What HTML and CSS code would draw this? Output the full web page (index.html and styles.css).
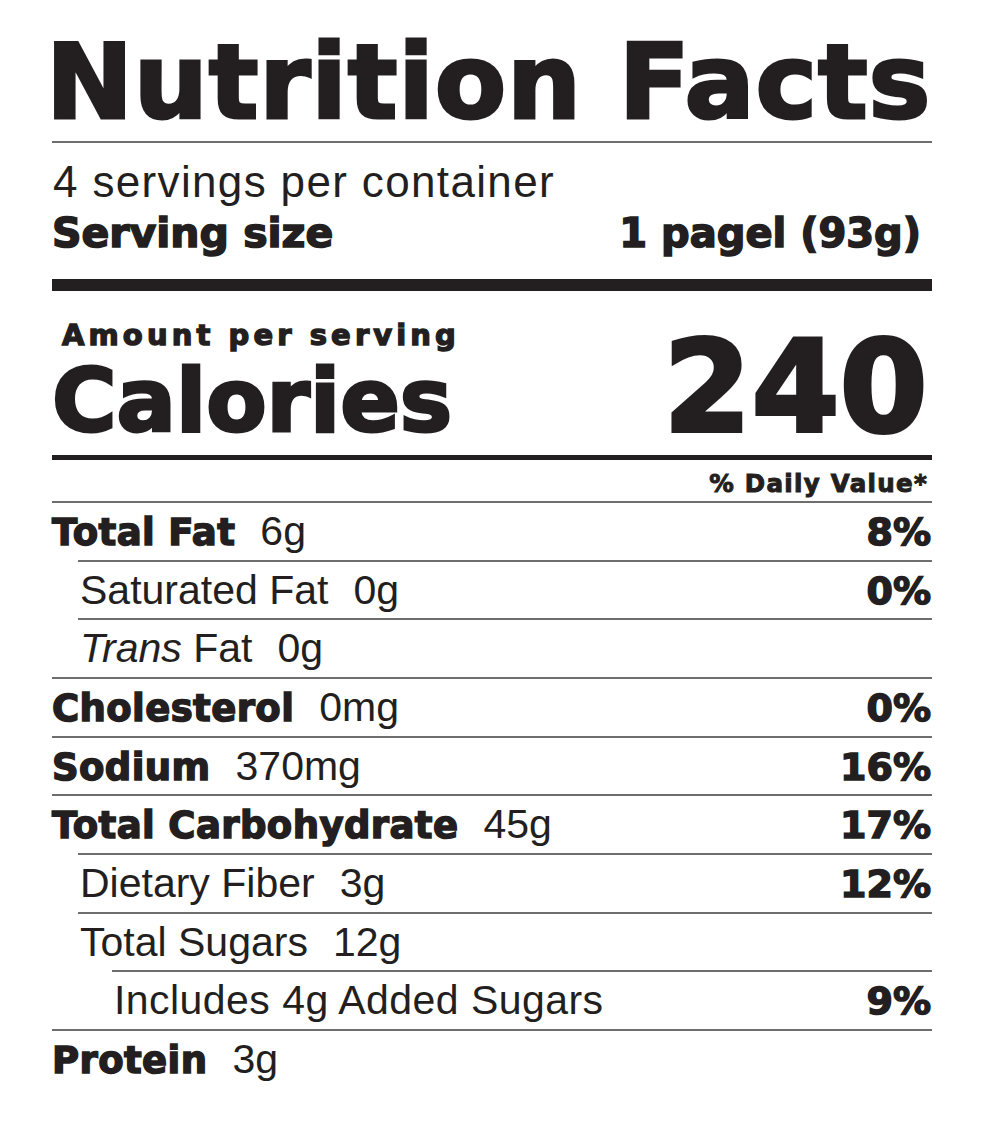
FILE: index.html
```html
<!DOCTYPE html>
<html lang="en">
<head>
<meta charset="utf-8">
<title>Nutrition Facts</title>
<link rel="stylesheet" href="styles.css">
</head>
<body>
<main class="label">
  <h1 class="title">Nutrition Facts</h1>
  <div class="rule-thin"></div>
  <p class="servings">4 servings per container</p>
  <div class="serving-size">
    <span>Serving size</span>
    <span class="size-val">1 pagel (93g)</span>
  </div>
  <div class="bar-thick"></div>
  <div class="cal-block">
    <div class="cal-left">
      <div class="amount">Amount per serving</div>
      <div class="calories">Calories</div>
    </div>
    <div class="cal-num">240</div>
  </div>
  <div class="bar-med"></div>
  <div class="dv-head">% Daily Value*</div>

  <div class="row">
    <span class="name"><b>Total Fat</b><span class="amt">6g</span></span>
    <b class="pct">8%</b>
  </div>
  <div class="row lv2">
    <span class="name reg">Saturated Fat<span class="amt">0g</span></span>
    <b class="pct">0%</b>
  </div>
  <div class="row lv2">
    <span class="name reg"><i>Trans</i> Fat<span class="amt">0g</span></span>
  </div>
  <div class="row">
    <span class="name"><b>Cholesterol</b><span class="amt">0mg</span></span>
    <b class="pct">0%</b>
  </div>
  <div class="row">
    <span class="name"><b>Sodium</b><span class="amt">370mg</span></span>
    <b class="pct">16%</b>
  </div>
  <div class="row">
    <span class="name"><b>Total Carbohydrate</b><span class="amt">45g</span></span>
    <b class="pct">17%</b>
  </div>
  <div class="row lv2">
    <span class="name reg">Dietary Fiber<span class="amt">3g</span></span>
    <b class="pct">12%</b>
  </div>
  <div class="row lv2">
    <span class="name reg">Total Sugars<span class="amt">12g</span></span>
  </div>
  <div class="row lv3">
    <span class="name reg">Includes 4g Added Sugars</span>
    <b class="pct">9%</b>
  </div>
  <div class="row">
    <span class="name"><b>Protein</b><span class="amt">3g</span></span>
  </div>
</main>
</body>
</html>
```

FILE: styles.css
```css
html, body {
  margin: 0;
  padding: 0;
  background: #ffffff;
}

body {
  color: #231f20;
  font-family: "Liberation Sans", Arial, sans-serif;
}

.label {
  width: 880px;
  margin-left: 52px;
  padding-top: 30px;
}

.title {
  margin: 0;
  font-family: "DejaVu Sans", sans-serif;
  font-weight: 700;
  font-size: 104px;
  line-height: 104px;
  white-space: nowrap;
  margin-left: -6px;
  letter-spacing: 0.8px;
  -webkit-text-stroke: 3px #231f20;
}

.rule-thin {
  margin-top: 7px;
  height: 2px;
  background: #6f6d6d;
}

.servings {
  margin: 14px 0 0 0;
  font-size: 44px;
  line-height: 50px;
  letter-spacing: 1.35px;
  padding-left: 1px;
}

.serving-size {
  margin-top: 1px;
  display: flex;
  justify-content: space-between;
  align-items: baseline;
  font-family: "DejaVu Sans", sans-serif;
  font-weight: 700;
  font-size: 41px;
  line-height: 50px;
  -webkit-text-stroke: 1.6px #231f20;
}

.size-val {
  font-size: 40px;
  padding-right: 11px;
}

.bar-thick {
  margin-top: 21px;
  height: 12px;
  background: #231f20;
}

.cal-block {
  display: flex;
  justify-content: space-between;
  align-items: flex-end;
  font-family: "DejaVu Sans", sans-serif;
  font-weight: 700;
}

.cal-left {
  display: flex;
  flex-direction: column;
}

.amount {
  margin-top: 27px;
  padding-left: 10px;
  font-size: 29px;
  line-height: 34px;
  letter-spacing: 4.1px;
  white-space: nowrap;
  -webkit-text-stroke: 1.4px #231f20;
}

.calories {
  font-size: 88px;
  line-height: 97px;
  letter-spacing: 0;
  -webkit-text-stroke: 3px #231f20;
}

.cal-num {
  font-size: 126px;
  line-height: 123px;
  letter-spacing: 0.5px;
  padding-right: 4px;
  -webkit-text-stroke: 4px #231f20;
}

.bar-med {
  margin-top: 6px;
  height: 5px;
  background: #231f20;
}

.dv-head {
  padding-top: 7px;
  padding-right: 4px;
  text-align: right;
  font-family: "DejaVu Sans", sans-serif;
  font-weight: 700;
  font-size: 24.5px;
  line-height: 34px;
  letter-spacing: 1.3px;
  -webkit-text-stroke: 1px #231f20;
}

.row {
  box-sizing: border-box;
  height: 58.67px;
  border-top: 2px solid #6f6d6d;
  padding-top: 1px;
  display: flex;
  justify-content: space-between;
  align-items: baseline;
  font-family: "DejaVu Sans", sans-serif;
  font-weight: 700;
  font-size: 37px;
  line-height: 54px;
  white-space: nowrap;
}

.row.lv2 {
  margin-left: 26px;
}

.row.lv3 {
  margin-left: 60px;
}

.row b {
  font-weight: 700;
  -webkit-text-stroke: 1.5px #231f20;
}

.name b {
  letter-spacing: 0.4px;
}

.name.reg,
.amt {
  font-family: "Liberation Sans", Arial, sans-serif;
  font-weight: 400;
  font-size: 41px;
  -webkit-text-stroke: 0;
}

.row.lv2 .name,
.row.lv3 .name {
  padding-left: 2px;
}

.row.lv3 .name {
  letter-spacing: 0.45px;
}

.amt {
  margin-left: 25px;
}

.name i {
  font-style: italic;
}

.pct {
  font-size: 38px;
  padding-right: 1px;
}
```
